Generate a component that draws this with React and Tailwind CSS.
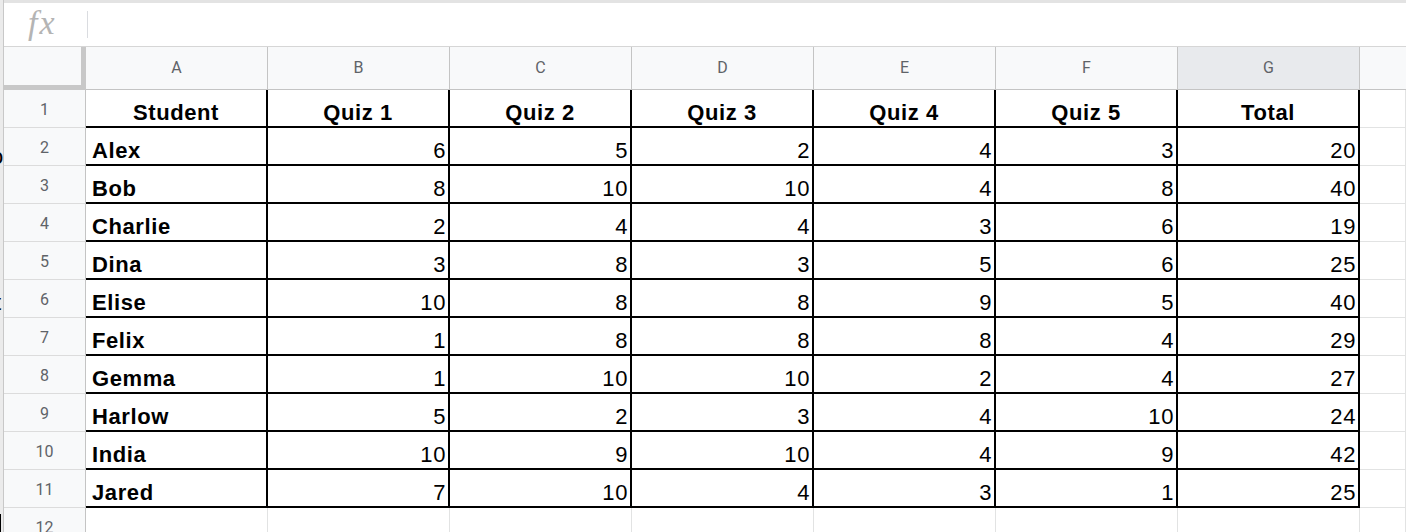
import React from 'react';

const COLS = ['A', 'B', 'C', 'D', 'E', 'F', 'G'];
const HEAD = ['Student', 'Quiz 1', 'Quiz 2', 'Quiz 3', 'Quiz 4', 'Quiz 5', 'Total'];
const ROWS = [
  ['Alex', 6, 5, 2, 4, 3, 20],
  ['Bob', 8, 10, 10, 4, 8, 40],
  ['Charlie', 2, 4, 4, 3, 6, 19],
  ['Dina', 3, 8, 3, 5, 6, 25],
  ['Elise', 10, 8, 8, 9, 5, 40],
  ['Felix', 1, 8, 8, 8, 4, 29],
  ['Gemma', 1, 10, 10, 2, 4, 27],
  ['Harlow', 5, 2, 3, 4, 10, 24],
  ['India', 10, 9, 10, 4, 9, 42],
  ['Jared', 7, 10, 4, 3, 1, 25],
];

function RowHead({ n }) {
  return (
    <div className="flex h-[38px] items-center justify-center border-r border-b border-r-[#c4c4c4] border-b-[#dcdcdc] bg-[#f8f9fa] pt-[3px] font-['Roboto',sans-serif] text-[16px] text-[#5f6368]">
      {n}
    </div>
  );
}

function Cell({ children, bold, align = 'right' }) {
  const alignCls =
    align === 'center' ? 'justify-center' : align === 'left' ? 'justify-start pl-[6px]' : 'justify-end pr-[2px]';
  return (
    <div
      className={`flex h-[38px] items-end overflow-hidden border-r-2 border-b-2 border-black pb-[1px] text-[22px] leading-[24px] tracking-[0.6px] text-black ${alignCls} ${
        bold ? 'font-bold' : 'font-normal'
      }`}
    >
      {children}
    </div>
  );
}

function Blank() {
  return <div className="h-[38px] border-r border-b border-[#e2e3e3]" />;
}

export default function App() {
  return (
    <div className="flex h-[532px] w-[1406px] overflow-hidden bg-white font-['Liberation_Sans',Arial,sans-serif]">
      {/* clipped edge of neighbouring panel */}
      <div className="relative w-[4px] shrink-0 overflow-hidden border-r border-[#c8c8c8] bg-[#ebebeb]">
        <span className="absolute left-[-9px] top-[146px] text-[22px] leading-none text-black">o</span>
        <span className="absolute left-[-5px] top-[292px] text-[22px] leading-none text-black">t</span>
        <span className="absolute left-[-1px] top-[514px] h-[18px] w-[2px] bg-black" />
      </div>

      <div className="flex min-w-0 flex-1 flex-col overflow-hidden">
        <div className="h-[3px] shrink-0 bg-[#e3e3e3]" />
        <div className="flex h-[44px] shrink-0 items-center border-b border-[#d6d6d6]">
          <div className="w-[83px] pb-[4px] pl-[24px] font-['Liberation_Serif',serif] text-[34px] italic leading-none tracking-[2px] text-[#b4b4b4]">
            fx
          </div>
          <div className="h-[27px] w-px bg-[#dadce0]" />
        </div>

        <div className="grid shrink-0 grid-cols-[82px_repeat(7,182px)_1fr]">
          <div className="h-[43px] border-r-[5px] border-b-[5px] border-[#c8c8c8] bg-[#f8f9fa]" />
          {COLS.map((c) => (
            <div
              key={c}
              className={`flex h-[43px] items-center justify-center border-r border-b border-[#c4c4c4] font-['Roboto',sans-serif] text-[16px] text-[#5f6368] ${
                c === 'G' ? 'bg-[#e8eaed]' : 'bg-[#f8f9fa]'
              }`}
            >
              {c}
            </div>
          ))}
          <div className="h-[43px] border-b border-[#c4c4c4] bg-[#f8f9fa]" />

          <RowHead n={1} />
          {HEAD.map((h) => (
            <Cell key={h} bold align="center">
              {h}
            </Cell>
          ))}
          <Blank />

          {ROWS.map((r, i) => (
            <React.Fragment key={r[0]}>
              <RowHead n={i + 2} />
              <Cell bold align="left">
                {r[0]}
              </Cell>
              {r.slice(1).map((v, j) => (
                <Cell key={j}>{v}</Cell>
              ))}
              <Blank />
            </React.Fragment>
          ))}

          <RowHead n={12} />
          {COLS.map((c) => (
            <Blank key={c} />
          ))}
          <Blank />
        </div>
      </div>
    </div>
  );
}
